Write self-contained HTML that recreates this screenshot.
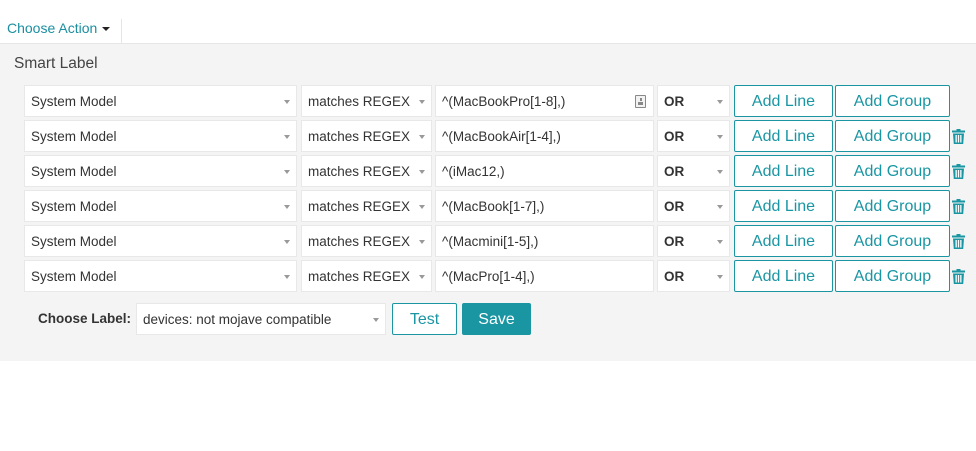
<!DOCTYPE html>
<html><head><style>
*{box-sizing:border-box;margin:0;padding:0}
body{width:976px;height:451px;background:#fff;font-family:"Liberation Sans",sans-serif;position:relative;overflow:hidden;color:#333}
.a{position:absolute}
.ca{left:7px;top:20px;font-size:14px;color:#1a8fa0}
.ca:after{content:"";display:inline-block;margin-left:5px;vertical-align:middle;border-left:4px solid transparent;border-right:4px solid transparent;border-top:4px solid #222}
.div{left:121px;top:19px;width:1px;height:24px;background:#e5e5e5}
.panel{left:0;top:43px;width:976px;height:318px;background:#f4f4f4;border-top:1px solid #e6e6e6}
.sl{left:14px;top:55px;font-size:15.5px;color:#444}
.box{position:absolute;height:32px;background:#fff;border:1px solid #e8e8e8;font-size:13.5px;display:flex;align-items:center;padding-left:6px;padding-top:1px;color:#333}
.sel:after{content:"";position:absolute;right:6px;top:14px;border-left:3.5px solid transparent;border-right:3.5px solid transparent;border-top:4px solid #999}
.btn{position:absolute;height:32px;border:1px solid #1a96a3;background:#fff;color:#1a96a3;font-size:16px;display:flex;align-items:center;justify-content:center;padding-top:1px;border-radius:2px}
.or{font-weight:bold}
.tr{position:absolute;width:13px;height:15px}
</style></head><body>
<div class="a ca">Choose Action</div>
<div class="a div"></div>
<div class="a panel"></div>
<div class="a sl">Smart Label</div>
<div id="rows"></div>
<div class="a" style="left:38px;top:311px;font-size:13.5px;font-weight:bold;color:#333">Choose Label:</div>
<div class="box sel" style="left:136px;top:303px;width:250px">devices: not mojave compatible</div>
<div class="btn" style="left:392px;top:303px;width:65px">Test</div>
<div class="btn" style="left:462px;top:303px;width:69px;background:#1a96a3;color:#fff">Save</div>
<script>
var v=["^(MacBookPro[1-8],)","^(MacBookAir[1-4],)","^(iMac12,)","^(MacBook[1-7],)","^(Macmini[1-5],)","^(MacPro[1-4],)"];
var h="";
for(var i=0;i<6;i++){var y=85+i*35;
h+='<div class="box sel" style="left:24px;top:'+y+'px;width:273px">System Model</div>';
h+='<div class="box sel" style="left:301px;top:'+y+'px;width:131px">matches REGEX</div>';
h+='<div class="box" style="left:435px;top:'+y+'px;width:219px">'+v[i]+(i==0?'<span style="position:absolute;right:7px;top:9px;width:11px;height:13px;border:1px solid #888;border-radius:1px;background:#f2f2f2"><span style="position:absolute;left:3.5px;top:2px;width:2px;height:3px;background:#888"></span><span style="position:absolute;left:2px;top:6px;width:5px;height:3px;background:#888"></span></span>':'')+'</div>';
h+='<div class="box sel or" style="left:657px;top:'+y+'px;width:73px">OR</div>';
h+='<div class="btn" style="left:734px;top:'+y+'px;width:99px">Add Line</div>';
h+='<div class="btn" style="left:835px;top:'+y+'px;width:115px">Add Group</div>';
if(i>0)h+='<svg class="tr" style="left:952px;top:'+(y+9)+'px" viewBox="0 0 13 15"><rect x="0" y="1.5" width="13" height="2" fill="#1a96a3"/><rect x="4.5" y="0" width="4" height="2" fill="#1a96a3"/><path d="M1 4.5h11l-0.8 10.5h-9.4z" fill="#1a96a3"/><rect x="3.5" y="6" width="1.3" height="7.5" fill="#fff"/><rect x="5.85" y="6" width="1.3" height="7.5" fill="#fff"/><rect x="8.2" y="6" width="1.3" height="7.5" fill="#fff"/></svg>';
}
document.getElementById("rows").innerHTML=h;
</script>
</body></html>
